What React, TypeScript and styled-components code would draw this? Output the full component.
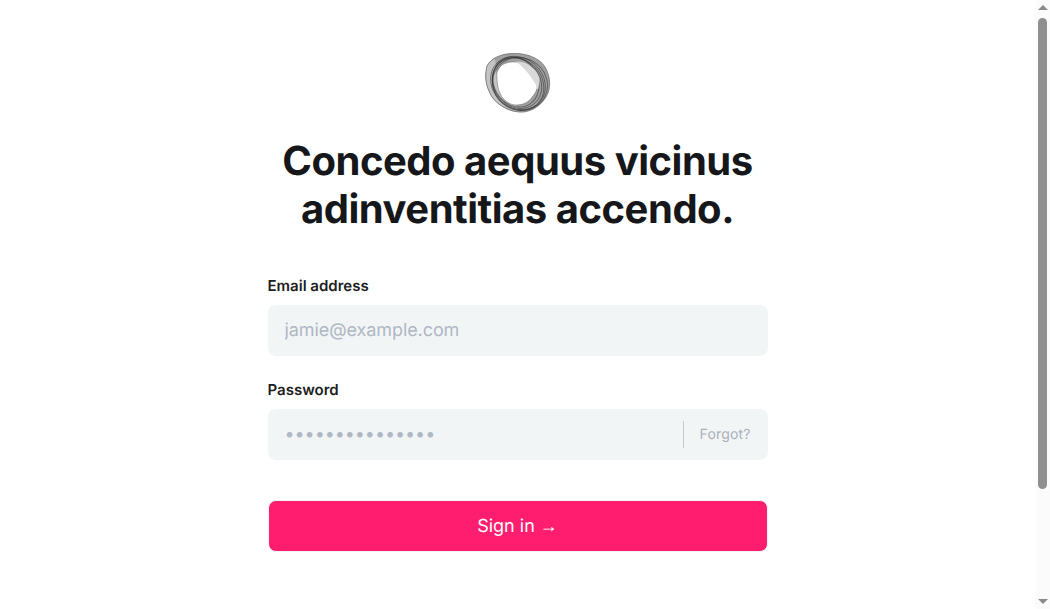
import React from "react";
import styled, { createGlobalStyle } from "styled-components";

const GlobalStyle = createGlobalStyle`
  body {
    margin: 0;
    background: #fff;
    font-family: Inter, "Liberation Sans", sans-serif;
  }
  * {
    box-sizing: border-box;
    text-rendering: geometricPrecision;
  }
`;

const Shell = styled.div`
  display: flex;
  height: 609px;
  overflow: hidden;
`;

const Page = styled.main`
  display: flex;
  flex: 1;
  flex-direction: column;
  align-items: center;
  padding-top: 53px;
`;

const Form = styled.form`
  display: flex;
  flex-direction: column;
  width: 500px;
`;

const LogoWrap = styled.div`
  display: flex;
  justify-content: center;
  margin-bottom: 24px;
`;

const Title = styled.h1`
  margin: 0 0 43px;
  font-size: 40px;
  line-height: 48px;
  font-weight: 700;
  letter-spacing: -0.48px;
  text-align: center;
  color: #16171a;
`;

const Label = styled.label`
  display: block;
  margin-bottom: 9px;
  font-size: 15px;
  line-height: 20px;
  font-weight: 600;
  color: #1c1d22;
`;

const Field = styled.div`
  display: flex;
  align-items: center;
  height: 51px;
  margin-bottom: 24px;
  border-radius: 8px;
  background: #f2f5f6;
`;

const Input = styled.input`
  flex: 1;
  min-width: 0;
  height: 100%;
  padding: 0 16px 1px 17px;
  border: 0;
  outline: 0;
  background: transparent;
  font-family: inherit;
  font-size: 18px;
  letter-spacing: -0.08px;
  color: #1a1b1f;

  &::placeholder {
    color: #afb8c4;
    opacity: 1;
  }
`;

const Forgot = styled.a`
  display: flex;
  align-items: center;
  height: 27px;
  padding: 0 17px 1px 16px;
  border-left: 1px solid #c3c9cf;
  font-size: 14px;
  letter-spacing: 0.15px;
  color: #a9b1bc;
`;

const Submit = styled.button`
  height: 52px;
  margin-top: 16px;
  border: 1px solid #f1f3f5;
  border-radius: 8px;
  background: #ff1d6f;
  font-family: inherit;
  font-size: 18px;
  color: #fff;
`;

const Arrow = styled.span`
  font-family: "Liberation Sans", sans-serif;
  font-size: 18px;
`;

const Rail = styled.div`
  display: flex;
  flex-direction: column;
  align-items: center;
  width: 15px;
  padding: 5px 0;
  background: #fbfbfb;
`;

const RailArrow = styled.div<{ $down?: boolean }>`
  width: 0;
  height: 0;
  border-left: 5px solid transparent;
  border-right: 5px solid transparent;
  border-bottom: ${(props) => (props.$down ? "0" : "5px solid #8a8a8a")};
  border-top: ${(props) => (props.$down ? "5px solid #8a8a8a" : "0")};
`;

const Thumb = styled.div`
  width: 9px;
  height: 471px;
  margin-top: 8px;
  margin-bottom: auto;
  border-radius: 5px;
  background: #8f8f8f;
`;

const LogoSvg = styled.svg`
  filter: blur(0.45px);
`;

const holePath =
  "M34 10c-6-2-12-1-17 2-4 4-6 8-5 12 0 9 2 15 5 20 4 5 9 8 14 8 7 0 13-3 16-8 4-4 6-9 5-14-3-6-4-8-5-11-4-3-9-7-13-9Z";
const outerPath =
  "M27 .5C40-.5 55 5 60 14c6 10 6 22 1 30-6 10-17 16-27 15C22 58 8 50 4 38 0 30 0 20 2 13 6 5 16 1 27 .5Z";

const Logo = () => (
  <LogoSvg width="66" height="60" viewBox="0 0 66 60" fill="none" aria-hidden="true">
    <path fill="#a0a0a0" d={outerPath} />
    <path fill="#c4c4c4" d="M4 38C0 30 0 20 2 13c2-3 5-6 8-7 1 4 0 8 2 18 0 9 2 15 5 20 1 3 3 7 4 11C14 52 7 46 4 38Z" />
    <path fill="#bcbcbc" d="M17 44c4 5 9 8 14 8l3 7c-5 0-9-1-13-3-2-4-3-8-4-12Z" />
    <g stroke="#2f2f2f" strokeOpacity="0.6" strokeWidth="0.9">
      <ellipse cx="32" cy="30" rx="27" ry="23" transform="rotate(50 32 30)" />
      <ellipse cx="33" cy="31" rx="28" ry="24" transform="rotate(48 33 31)" />
      <ellipse cx="33" cy="30" rx="29" ry="25" transform="rotate(40 33 30)" />
      <ellipse cx="31" cy="29" rx="26" ry="22" transform="rotate(60 31 29)" />
      <ellipse cx="35" cy="31" rx="28" ry="26" transform="rotate(30 35 31)" />
    </g>
    <path fill="#fff" d={holePath} />
    <path stroke="#555" strokeOpacity="0.5" strokeWidth="0.8" d={holePath} />
    <path
      fill="#d9d9d9"
      d="M29 9c6-1 11 0 15 3 5 3 8 7 10 12 1 4 0 8-1 12h-1c0-2-1-4-2-6-3-4-5-8-8-11-3-3-5-6-8-8-2-1-3-2-5-2Z"
    />
    <path stroke="#6f6f6f" strokeWidth="0.8" d={outerPath} />
  </LogoSvg>
);

const App = () => (
  <>
    <GlobalStyle />
    <Shell>
      <Page>
        <Form>
          <LogoWrap>
            <Logo />
          </LogoWrap>
          <Title>Concedo aequus vicinus adinventitias accendo.</Title>
          <Label htmlFor="email">Email address</Label>
          <Field>
            <Input id="email" type="email" placeholder="jamie@example.com" />
          </Field>
          <Label htmlFor="password">Password</Label>
          <Field>
            <Input id="password" type="password" placeholder="•••••••••••••••" />
            <Forgot>Forgot?</Forgot>
          </Field>
          <Submit type="button">
            Sign in <Arrow>→</Arrow>
          </Submit>
        </Form>
      </Page>
      <Rail>
        <RailArrow />
        <Thumb />
        <RailArrow $down />
      </Rail>
    </Shell>
  </>
);

export default App;
